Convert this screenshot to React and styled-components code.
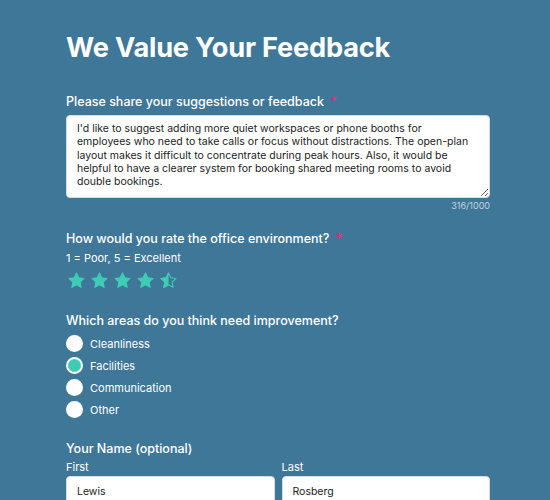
import React from "react";
import styled, { createGlobalStyle } from "styled-components";

const Global = createGlobalStyle`
  html, body { margin: 0; padding: 0; background: #3f7799; }
  body { font-family: Inter, "Noto Sans", sans-serif; color: #ffffff; }
`;

const starPath =
  "M12 2.5l2.9 6.1 6.6.8-4.9 4.6 1.3 6.6L12 17.3l-5.9 3.3 1.3-6.6-4.9-4.6 6.6-.8z";

function Star({ half }) {
  return (
    <svg width="19" height="19" viewBox="0 0 24 24">
      <defs>
        <clipPath id="lefthalf">
          <rect x="0" y="0" width="12" height="24" />
        </clipPath>
      </defs>
      {half ? (
        <>
          <path
            d={starPath}
            fill="none"
            stroke="#3ecdb4"
            strokeWidth="1.4"
            strokeLinejoin="round"
          />
          <path
            d={starPath}
            fill="#3ecdb4"
            stroke="#3ecdb4"
            strokeWidth="1.4"
            strokeLinejoin="round"
            clipPath="url(#lefthalf)"
          />
        </>
      ) : (
        <path
          d={starPath}
          fill="#3ecdb4"
          stroke="#3ecdb4"
          strokeWidth="1.4"
          strokeLinejoin="round"
        />
      )}
    </svg>
  );
}

const areas = ["Cleanliness", "Facilities", "Communication", "Other"];

export default function App() {
  return (
    <>
      <Global />
      <Page>
        <Title>We Value Your Feedback</Title>

        <Field>
          <Label>
            Please share your suggestions or feedback <Req>*</Req>
          </Label>
          <TextArea
            defaultValue="I'd like to suggest adding more quiet workspaces or phone booths for employees who need to take calls or focus without distractions. The open-plan layout makes it difficult to concentrate during peak hours. Also, it would be helpful to have a clearer system for booking shared meeting rooms to avoid double bookings."
          />
          <Counter>316/1000</Counter>
        </Field>

        <Field>
          <Label>
            How would you rate the office environment? <Req>*</Req>
          </Label>
          <Hint>1 = Poor, 5 = Excellent</Hint>
          <Stars>
            <Star />
            <Star />
            <Star />
            <Star />
            <Star half />
          </Stars>
        </Field>

        <Field>
          <Label>Which areas do you think need improvement?</Label>
          <Options>
            {areas.map((a) => (
              <Option key={a}>
                <Radio checked={a === "Facilities"} />
                {a}
              </Option>
            ))}
          </Options>
        </Field>

        <Field>
          <Label>Your Name (optional)</Label>
          <NameRow>
            <NameCol>
              <SubLabel>First</SubLabel>
              <Input defaultValue="Lewis" />
            </NameCol>
            <NameCol>
              <SubLabel>Last</SubLabel>
              <Input defaultValue="Rosberg" />
            </NameCol>
          </NameRow>
        </Field>
      </Page>
    </>
  );
}

const Page = styled.div`
  width: 424px;
  padding: 31px 0 0 66px;
  display: flex;
  flex-direction: column;
`;

const Title = styled.h1`
  margin: 0 0 28px;
  font-size: 27.2px;
  font-weight: 700;
  letter-spacing: -0.2px;
  line-height: 34px;
`;

const Field = styled.div`
  display: flex;
  flex-direction: column;
  margin-bottom: 22px;
`;

const Label = styled.div`
  font-size: 12.5px;
  font-weight: 500;
  line-height: 18px;
  margin-bottom: 4px;
`;

const Req = styled.span`
  color: #e0306a;
  margin-left: 3px;
`;

const TextArea = styled.textarea`
  box-sizing: border-box;
  width: 424px;
  height: 83px;
  padding: 6px 14px 6px 10px;
  border: 1px solid #d4dde4;
  border-radius: 4px;
  background: #ffffff;
  color: #222;
  font-family: Inter, "Noto Sans", sans-serif;
  font-size: 10.5px;
  line-height: 13.3px;
  resize: vertical;
  outline: none;
`;

const Counter = styled.div`
  align-self: flex-end;
  margin-top: 2px;
  margin-bottom: -3px;
  font-size: 9px;
  color: #c3d3de;
`;

const Hint = styled.div`
  font-size: 11px;
  margin-top: -1px;
  margin-bottom: 6px;
`;

const Stars = styled.div`
  display: flex;
  gap: 4px;
  margin-left: 1px;
`;

const Options = styled.div`
  display: flex;
  flex-direction: column;
  gap: 5px;
  margin-top: 1px;
`;

const Option = styled.label`
  display: flex;
  align-items: center;
  gap: 7px;
  font-size: 11px;
  height: 17px;
`;

const Radio = styled.span`
  box-sizing: border-box;
  width: 17px;
  height: 17px;
  border-radius: 50%;
  background: ${(p) => (p.checked ? "#3ecdb4" : "#ffffff")};
  border: ${(p) => (p.checked ? "2.5px solid #ffffff" : "none")};
`;

const NameRow = styled.div`
  display: flex;
  gap: 7px;
`;

const NameCol = styled.div`
  flex: 1;
  display: flex;
  flex-direction: column;
`;

const SubLabel = styled.div`
  font-size: 11px;
  margin-top: -2px;
  margin-bottom: 2px;
`;

const Input = styled.input`
  box-sizing: border-box;
  height: 30px;
  padding: 0 10px;
  border: 1px solid #d4dde4;
  border-radius: 4px;
  background: #fff;
  color: #222;
  font-family: Inter, "Noto Sans", sans-serif;
  font-size: 10.5px;
  outline: none;
`;
